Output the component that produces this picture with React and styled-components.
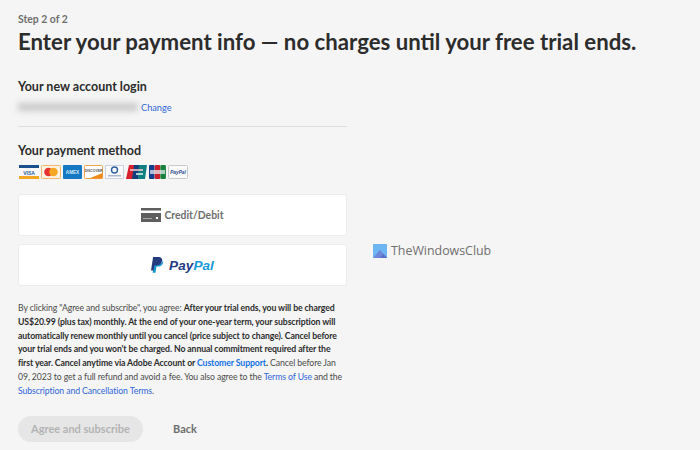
import React from "react";
import styled, { createGlobalStyle } from "styled-components";

const Global = createGlobalStyle`
  html, body { margin: 0; padding: 0; background: #f5f5f5; }
  body { font-family: Lato, "Noto Sans", sans-serif; width: 700px; height: 450px; overflow: hidden; }
`;
const Page = styled.main`
  position: relative;
  box-sizing: border-box;
  width: 700px;
  height: 450px;
  padding: 12px 0 0 18px;
  color: #2c2c2c;
`;
const Step = styled.div`
  font-size: 10.4px;
  line-height: 15px;
  font-weight: 700;
  color: #6e6e6e;
`;
const Title = styled.h1`
  margin: 0;
  font-size: 22.2px;
  line-height: 30px;
  font-weight: 700;
  color: #2c2c2c;
  white-space: nowrap;
`;
const Column = styled.div`
  width: 329px;
  display: flex;
  flex-direction: column;
`;
const SectionTitle = styled.h2`
  margin: ${(p) => p.$top}px 0 0;
  font-size: 12.5px;
  line-height: 18px;
  font-weight: 700;
  color: #2c2c2c;
`;
const LoginRow = styled.div`
  display: flex;
  align-items: center;
  height: 16px;
  margin-top: 3px;
`;
const BlurredEmail = styled.span`
  display: block;
  width: 120px;
  height: 8px;
  margin: 0 3px 0 0;
  background: #c9c9c9;
  filter: blur(3px);
`;
const Change = styled.a`
  font-size: 9.2px;
  color: #2f66d8;
`;
const Divider = styled.hr`
  width: 100%;
  margin: 11px 0 0;
  border: 0;
  border-top: 1px solid #dedede;
`;
const Cards = styled.div`
  display: flex;
  gap: 2px;
  margin-top: 5px;
  height: 14px;
  padding-left: 1px;
`;
const PayBox = styled.button`
  display: flex;
  align-items: center;
  justify-content: center;
  gap: 3px;
  height: 42px;
  margin-top: ${(p) => p.$top}px;
  padding: 0;
  border: 1px solid #ececec;
  border-radius: 3px;
  background: #fff;
  font-family: inherit;
  font-size: 10.4px;
  font-weight: 700;
  color: #6e6e6e;
`;
const Legal = styled.p`
  margin: 15px 0 0;
  width: 330px;
  font-size: 8.7px;
  letter-spacing: -0.1px;
  line-height: 13.8px;
  color: #4b4b4b;
  white-space: nowrap;
  b { font-weight: 700; color: #2c2c2c; }
  a { color: #2f66d8; }
  a.strong { font-weight: 700; color: #1473e6; }
`;
const Actions = styled.div`
  display: flex;
  align-items: center;
  margin-top: 18px;
`;
const Agree = styled.button`
  width: 125px;
  height: 26px;
  padding: 0;
  border: 0;
  border-radius: 13px;
  background: #e6e6e6;
  color: #b3b3b3;
  font-family: inherit;
  font-size: 11px;
  font-weight: 700;
`;
const Back = styled.button`
  margin-left: 30px;
  padding: 0;
  border: 0;
  background: none;
  color: #6e6e6e;
  font-family: inherit;
  font-size: 11px;
  font-weight: 700;
`;
const Watermark = styled.div`
  position: absolute;
  left: 373px;
  top: 244px;
  display: flex;
  align-items: center;
  gap: 4px;
  font-family: "Open Sans", sans-serif;
  font-size: 12.4px;
  line-height: 14px;
  color: #6f6f6f;
`;
const PayPalWord = styled.span`
  font-family: "Liberation Sans", sans-serif;
  font-style: italic;
  font-weight: 700;
  font-size: 13.5px;
  letter-spacing: 0.1px;
  color: #253b80;
  margin-left: 2px;
  i { color: #179bd7; }
`;
const CardText = styled.text`
  font-family: "Liberation Sans", sans-serif;
  font-weight: 700;
`;

const Visa = () => (
  <svg width="20" height="14" viewBox="0 0 20 14">
    <rect width="20" height="14" fill="#f7f7f7" />
    <rect width="20" height="3" fill="#1a4f8f" />
    <rect y="11" width="20" height="3" fill="#f5a623" />
    <CardText x="10" y="9.500" fontSize="5" textAnchor="middle" fill="#2a5f9f">VISA</CardText>
  </svg>
);
const Master = () => (
  <svg width="20" height="14" viewBox="0 0 20 14">
    <rect x=".5" y=".5" width="19" height="13" rx="1" fill="#fff4e4" stroke="#f2b66c" />
    <circle cx="7.500" cy="7" r="4.300" fill="#e5322d" />
    <circle cx="12.500" cy="7" r="4.300" fill="#f5a623" />
  </svg>
);
const Amex = () => (
  <svg width="19" height="14" viewBox="0 0 19 14">
    <rect width="19" height="14" rx="1" fill="#1578c2" />
    <CardText x="9.500" y="9" fontSize="4.600" textAnchor="middle" fill="#d5e9f7">AMEX</CardText>
  </svg>
);
const Discover = () => (
  <svg width="19" height="14" viewBox="0 0 19 14">
    <rect x=".5" y=".5" width="18" height="13" rx="1" fill="#fff" stroke="#f0a44a" />
    <path d="M5 13.500 18.500 8v5.500z" fill="#f08a1d" />
    <CardText x="9.500" y="7" fontSize="3.400" textAnchor="middle" fill="#555">DISCOVER</CardText>
  </svg>
);
const Diners = () => (
  <svg width="19" height="14" viewBox="0 0 19 14">
    <rect x=".5" y=".5" width="18" height="13" fill="#fbfbfb" stroke="#ccd3e0" />
    <circle cx="9.500" cy="5" r="3" fill="none" stroke="#2d5d9f" strokeWidth="1.400" />
    <rect x="3" y="10" width="13" height="1.500" fill="#a8b6cc" />
  </svg>
);
const Union = () => (
  <svg width="21" height="14" viewBox="0 0 21 14">
    <path d="M3 0h6L7 14H0z" fill="#d8202f" />
    <path d="M8 0h6l-2 14H6z" fill="#123f7c" />
    <path d="M13 0h8l-2 14h-7z" fill="#0f7f80" />
    <rect x="4" y="4" width="13" height="2" fill="#f3c8cc" opacity=".8" />
    <rect x="10" y="8" width="7" height="2" fill="#cfe6e6" opacity=".85" />
  </svg>
);
const Jcb = () => (
  <svg width="17" height="14" viewBox="0 0 17 14">
    <rect x="0" width="5.500" height="14" rx="1" fill="#123f8c" />
    <rect x="5.700" width="5.500" height="14" rx="1" fill="#c9202f" />
    <rect x="11.400" width="5.500" height="14" rx="1" fill="#17803c" />
    <rect x="1" y="5" width="15" height="4" fill="#e4e8ec" opacity=".75" />
  </svg>
);
const PayPalMini = () => (
  <svg width="20" height="14" viewBox="0 0 20 14">
    <rect x=".5" y=".5" width="19" height="13" rx="1" fill="#fafafa" stroke="#c9c9c9" />
    <CardText x="10" y="9" fontSize="4.800" fontStyle="italic" textAnchor="middle" fill="#2b4a93">PayPal</CardText>
  </svg>
);
const CardIcon = () => (
  <svg width="20" height="14" viewBox="0 0 20 14">
    <rect y="0" width="20" height="2.500" fill="#5f5f5f" />
    <path d="M0 5h20v9H0zM15 9v2h2V9z" fill="#5f5f5f" fillRule="evenodd" />
    <rect x="2" y="10" width="9" height="1" fill="#a8a8a8" />
  </svg>
);
const PayPalMark = () => (
  <svg width="13" height="16" viewBox="0 0 13 16">
    <path d="M4.500 15.800H1.600l.5-3 .9-5.400h3c3.300 0 5.300-1.300 6-4 .8 2.700-.9 6.100-5 6.100H5.500z" fill="#179bd7" />
    <path d="M0 13.400 2.100 0h5C10.200 0 11.800 1.600 11 4.400c-.7 2.700-2.900 4-5.800 4H3.400l-.8 5z" fill="#253b80" />
  </svg>
);
const LogoSquare = () => (
  <svg width="14" height="14" viewBox="0 0 14 14">
    <rect width="14" height="14" fill="#6eb6f2" />
    <path d="M0 14 7 6l7 8z" fill="#6f86d8" />
    <path d="M7 14l3.500-4 3.500 4z" fill="#5a6fc8" />
  </svg>
);

export default function App() {
  return (
    <Page>
      <Global />
      <Step>Step 2 of 2</Step>
      <Title>Enter your payment info — no charges until your free trial ends.</Title>
      <Column>
        <SectionTitle $top={21}>Your new account login</SectionTitle>
        <LoginRow>
          <BlurredEmail />
          <Change>Change</Change>
        </LoginRow>
        <Divider />
        <SectionTitle $top={15}>Your payment method</SectionTitle>
        <Cards>
          <Visa /><Master /><Amex /><Discover /><Diners /><Union /><Jcb /><PayPalMini />
        </Cards>
        <PayBox $top={15}><CardIcon />Credit/Debit</PayBox>
        <PayBox $top={8}><PayPalMark /><PayPalWord>Pay<i>Pal</i></PayPalWord></PayBox>
        <Legal>
          By clicking "Agree and subscribe", you agree: <b>After your trial ends, you will be charged</b><br />
          <b>US$20.99 (plus tax) monthly. At the end of your one-year term, your subscription will</b><br />
          <b>automatically renew monthly until you cancel (price subject to change). Cancel before</b><br />
          <b>your trial ends and you won't be charged. No annual commitment required after the</b><br />
          <b>first year. Cancel anytime via Adobe Account or </b><a className="strong">Customer Support</a><b>.</b> Cancel before Jan<br />
          09, 2023 to get a full refund and avoid a fee. You also agree to the <a>Terms of Use</a> and the<br />
          <a>Subscription and Cancellation Terms</a>.
        </Legal>
        <Actions>
          <Agree>Agree and subscribe</Agree>
          <Back>Back</Back>
        </Actions>
      </Column>
      <Watermark><LogoSquare />TheWindowsClub</Watermark>
    </Page>
  );
}
